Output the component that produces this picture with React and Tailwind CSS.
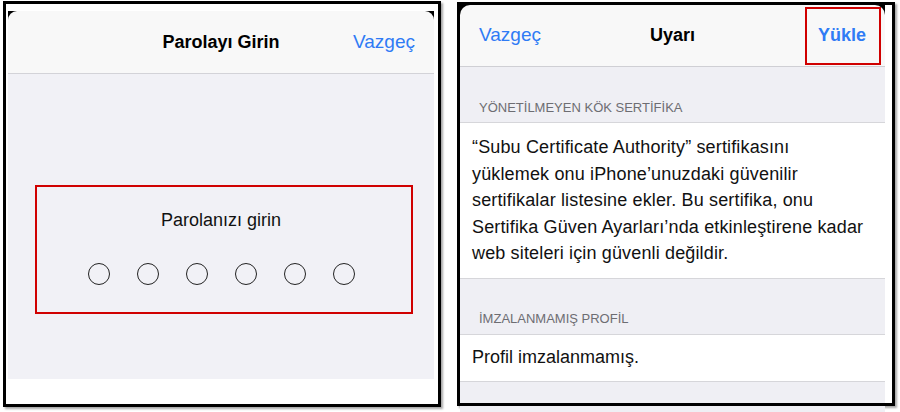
const font = { fontFamily: '"Liberation Sans", Arial, sans-serif' };

function Dot() {
  return <div className="w-[22px] h-[22px] rounded-full border-[1.5px] border-[#222]" />;
}

function PasscodePanel() {
  return (
    <div className="ml-[3px] mt-[1px] w-[438px] h-[406px] border-[3px] border-black bg-white shadow-[2px_2px_2px_rgba(0,0,0,0.35)]">
      <div className="ml-[2px] mt-[7px] w-[426px] bg-black">
        <div className="h-[63px] rounded-t-[9px] bg-[#f8f8f8] border-b border-[#d3d3d8] grid grid-cols-[1fr_auto_1fr] items-center px-[19px]">
          <div />
          <div className="text-[18px] font-bold text-black">Parolayı Girin</div>
          <div className="justify-self-end text-[19px] text-[#2f7bf5]">Vazgeç</div>
        </div>
        <div className="h-[305px] bg-[#f1f1f6] pt-[111px]">
          <div className="ml-[27px] w-[378px] h-[129px] border-2 border-[#d00000] pr-[6px] pt-[23px] flex flex-col items-center">
            <div className="text-[18px] leading-[20px] text-[#111]">Parolanızı girin</div>
            <div className="mt-[33px] flex gap-[27px]">
              <Dot />
              <Dot />
              <Dot />
              <Dot />
              <Dot />
              <Dot />
            </div>
          </div>
        </div>
      </div>
    </div>
  );
}

function WarningPanel() {
  return (
    <div className="ml-[16px] mt-[2px] flex flex-col">
      <div className="w-[438px] h-[405px] border-[3px] border-black bg-white shadow-[2px_2px_2px_rgba(0,0,0,0.35)] overflow-hidden">
        <div className="w-[425px] bg-black">
          <div className="h-[62px] rounded-t-[10px] bg-[#f8f8f8] border-b border-[#cfcfd4] grid grid-cols-[1fr_auto_1fr] items-center px-[4px]">
            <div className="pl-[15px] text-[19px] text-[#2f7bf5]">Vazgeç</div>
            <div className="text-[18px] font-bold text-black">Uyarı</div>
            <div className="justify-self-end h-[58px] w-[76px] border-2 border-[#d00000] flex items-center justify-end pr-[13px] text-[18px] font-bold text-[#2f7bf5]">
              Yükle
            </div>
          </div>
          <div className="bg-[#efeff4]">
            <div className="h-[56px] flex items-end pb-[5px] pl-[19px] text-[13px] text-[#6d6d72] border-b border-[#d6d6da]">
              YÖNETİLMEYEN KÖK SERTİFİKA
            </div>
            <div className="bg-white pl-[12px] pt-[11px] pb-[11px] text-[18px] leading-[26.5px] tracking-[0.15px] text-[#111] border-b border-[#d6d6da]">
              “Subu Certificate Authority” sertifikasını
              <br />
              yüklemek onu iPhone’unuzdaki güvenilir
              <br />
              sertifikalar listesine ekler. Bu sertifika, onu
              <br />
              Sertifika Güven Ayarları’nda etkinleştirene kadar
              <br />
              web siteleri için güvenli değildir.
            </div>
            <div className="h-[56px] flex items-end pb-[5px] pl-[19px] text-[13px] text-[#6d6d72] border-b border-[#d6d6da]">
              İMZALANMAMIŞ PROFİL
            </div>
            <div className="h-[47px] bg-white flex items-center pl-[12px] text-[18px] text-[#111] border-b border-[#d6d6da]">
              Profil imzalanmamış.
            </div>
            <div className="h-[40px]" />
          </div>
        </div>
      </div>
      <div className="ml-[3px] w-[425px] h-[6px] bg-[#efeff4]" />
    </div>
  );
}

export default function App() {
  return (
    <div className="w-[900px] h-[412px] bg-white flex overflow-hidden" style={font}>
      <PasscodePanel />
      <WarningPanel />
    </div>
  );
}
